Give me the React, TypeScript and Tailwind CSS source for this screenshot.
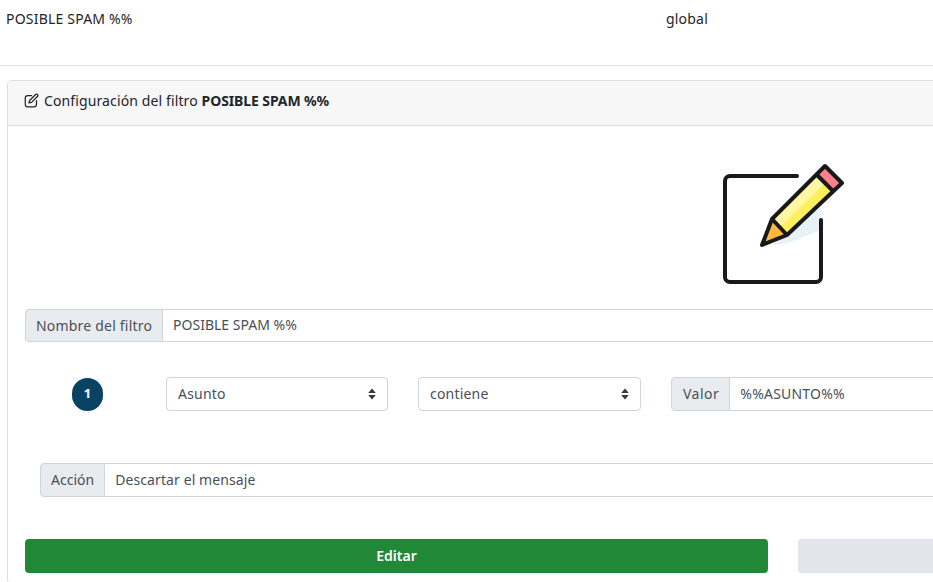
const font = { fontFamily: '"Noto Sans", sans-serif' };

function PencilIcon() {
  return (
    <svg width="140" height="135" viewBox="0 0 140 135" fill="none">
      <path d="M111 52 V75 L78 88 L62 90 Z" fill="#e6f2f7" />
      <path d="M87 21 H20 a5 5 0 0 0 -5 5 V122 a5 5 0 0 0 5 5 H106 a5 5 0 0 0 5 -5 V65" stroke="#191919" strokeWidth="4" strokeLinecap="round" />
      <path d="M62 64 L107 22 L122 37 L77 80 Z" fill="#fff7a3" />
      <path d="M70 72 L114 29 L122 37 L77 80 Z" fill="#ffef5e" />
      <path d="M107 22 L115 11 L132 28 L122 37 Z" fill="#ff808f" />
      <path d="M62 64 L52 90 L77 80 Z" fill="#ffb93f" />
      <path d="M52 90 L62 64 L115 11 L132 28 L77 80 Z" stroke="#191919" strokeWidth="4" strokeLinejoin="round" />
      <path d="M62 64 L77 80 M107 20 L123 36" stroke="#191919" strokeWidth="4" />
    </svg>
  );
}

function Field({ label, value, className, labelClass, valueClass }: { label: string; value: string; className: string; labelClass: string; valueClass: string }) {
  return (
    <div className={`flex text-[14px] text-[#495057] ${className}`}>
      <span className={`flex items-center px-[10px] pb-[1px] h-full bg-[#e9ecef] border border-[#ced4da] rounded-l-[4px] text-[#495057] ${labelClass}`}>
        {label}
      </span>
      <div className={`flex-1 flex items-center px-[10px] pb-[1px] border border-l-0 border-[#ced4da] bg-white ${valueClass}`}>{value}</div>
    </div>
  );
}

function Select({ value, className }: { value: string; className: string }) {
  return (
    <div className={`h-[34px] flex items-center justify-between pl-[11px] pr-[11px] pb-[1px] border border-[#ced4da] rounded-[4px] bg-white text-[14px] text-[#495057] ${className}`}>
      <span>{value}</span>
      <svg width="8" height="12" viewBox="0 0 8 12" fill="#343a40">
        <path d="M4 0.5 L7.8 5 H0.2 Z M4 11.5 L0.2 7 H7.8 Z" />
      </svg>
    </div>
  );
}

export default function App() {
  return (
    <div className="w-[933px] h-[582px] overflow-hidden bg-white tracking-[0.2px]" style={font}>
      <div className="w-[1560px]">
        <div className="flex h-[57px] pt-[8px] text-[14px] text-[#212529] border-b border-[#e5e5e5] box-content">
          <div className="w-[666px] pl-[6px]">POSIBLE SPAM %%</div>
          <div>global</div>
        </div>
        <div className="ml-[7px] mt-[14px] border border-[#dfdfdf] rounded-[4px]">
          <div className="flex items-center h-[45px] pl-[16px] pb-[5px] bg-[#f7f7f7] border-b border-[#dfdfdf] text-[14px] text-[#212529] gap-[5px] tracking-[0.12px]">
            <svg width="15" height="15" viewBox="0 0 24 24" fill="none" stroke="#212529" strokeWidth="2" strokeLinecap="round" strokeLinejoin="round">
              <path d="M12 4H6a4 4 0 0 0-4 4v10a4 4 0 0 0 4 4h10a4 4 0 0 0 4-4v-6" />
              <path d="M18.5 2.5a2.1 2.1 0 0 1 3 3L12 15l-4 1 1-4z" />
            </svg>
            <span>
              Configuración del filtro <b className="font-bold tracking-[-0.1px]">POSIBLE SPAM %%</b>
            </span>
          </div>
          <div className="pl-[17px] pb-[10px]">
            <div className="flex justify-center pr-[25px] pt-[29px] h-[183px]">
              <PencilIcon />
            </div>
            <Field label="Nombre del filtro" value="POSIBLE SPAM %%" className="h-[33px]" labelClass="" valueClass="tracking-[0px] pb-[2px]" />
            <div className="flex items-center h-[34px] mt-[35px]">
              <div className="w-[141px] flex justify-center pr-[16px]">
                <span className="w-[31px] h-[33px] rounded-full bg-[#084364] text-white text-[13px] font-bold flex items-center justify-center">1</span>
              </div>
              <div className="flex gap-[30px] flex-1">
                <Select value="Asunto" className="w-[222px]" />
                <Select value="contiene" className="w-[223px]" />
                <Field label="Valor" value="%%ASUNTO%%" className="h-[34px] flex-1" labelClass="tracking-[0.5px] pl-[11px]" valueClass="" />
              </div>
            </div>
            <Field label="Acción" value="Descartar el mensaje" className="h-[34px] mt-[52px] ml-[15px]" labelClass="tracking-[0px]" valueClass="tracking-[0.1px]" />
            <div className="flex gap-[30px] mt-[42px]">
              <div className="w-[743px] h-[34px] pb-[2px] rounded-[4px] bg-[#218838] text-white text-[14px] font-semibold tracking-normal flex items-center justify-center">Editar</div>
              <div className="flex-1 h-[34px] rounded-[4px] bg-[#e2e5ea]" />
            </div>
          </div>
        </div>
      </div>
    </div>
  );
}
